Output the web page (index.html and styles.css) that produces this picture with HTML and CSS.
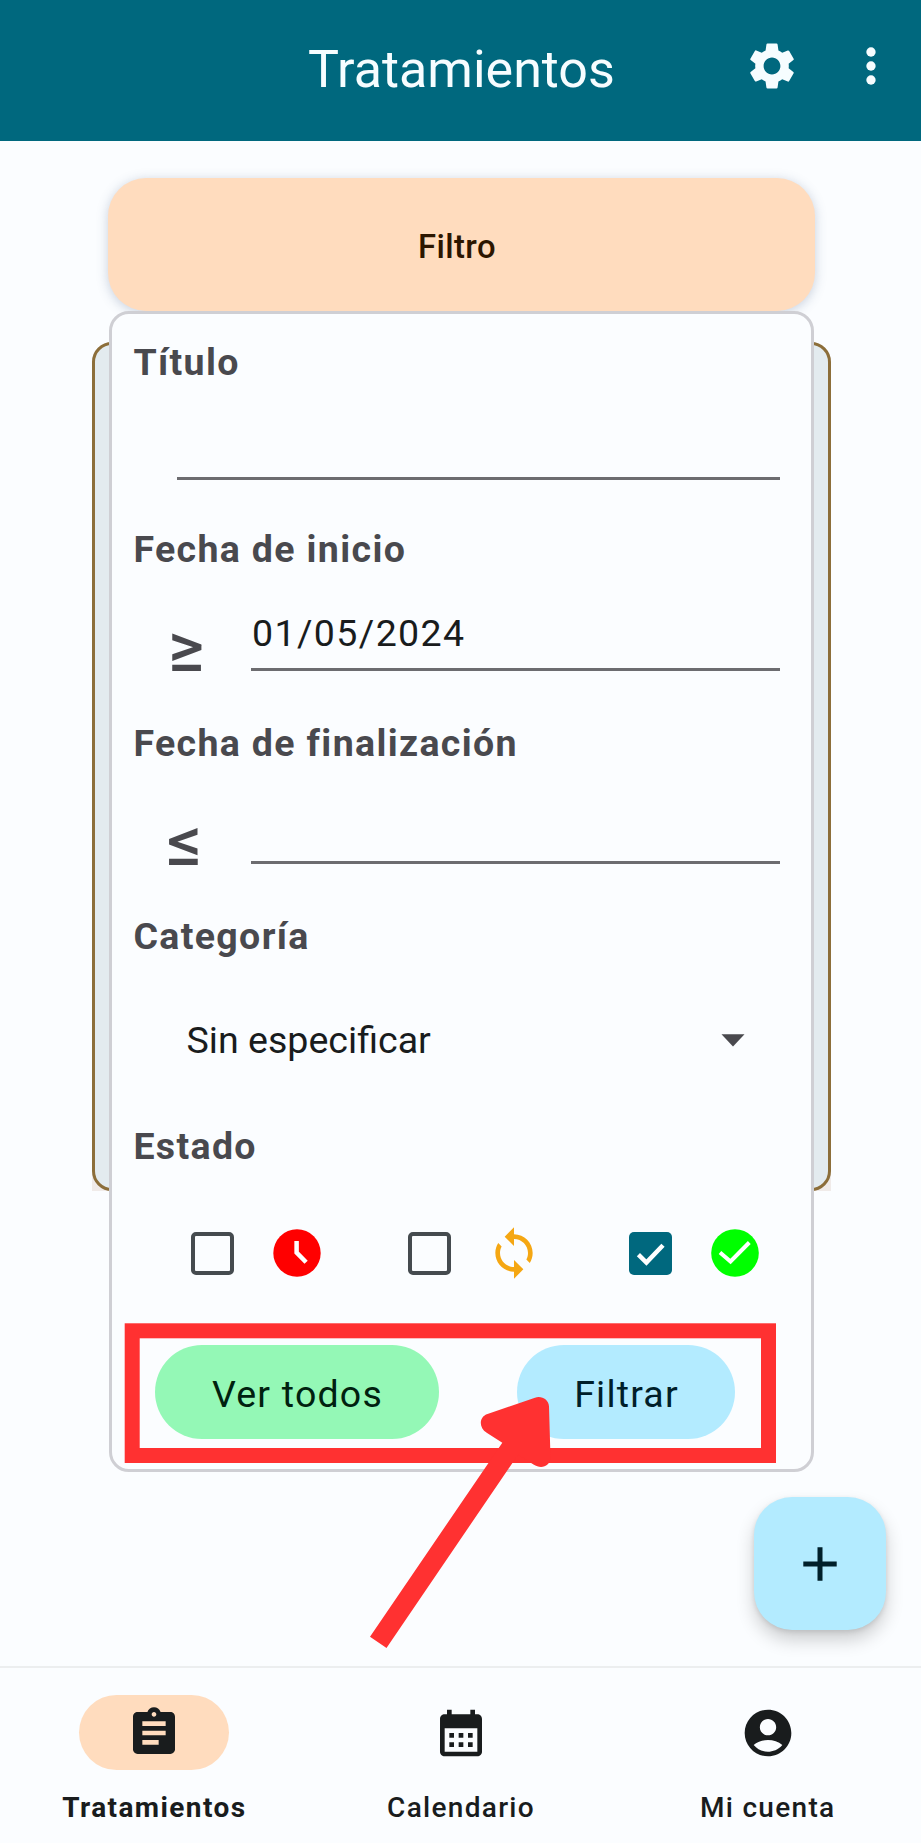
FILE: index.html
```html
<!DOCTYPE html>
<html lang="es">
<head>
<meta charset="utf-8">
<title>Tratamientos</title>
<link rel="stylesheet" href="styles.css">
</head>
<body>
<div class="app">
  <header class="topbar">
    <h1 class="topbar-title">Tratamientos</h1>
    <svg class="icon icon-gear" viewBox="0 0 24 24"><path d="M19.14 12.94c.04-.3.06-.61.06-.94 0-.32-.02-.64-.07-.94l2.03-1.58c.18-.14.23-.41.12-.61l-1.92-3.32c-.12-.22-.37-.29-.59-.22l-2.39.96c-.5-.38-1.03-.7-1.62-.94l-.36-2.54c-.04-.24-.24-.41-.48-.41h-3.84c-.24 0-.43.17-.47.41l-.36 2.54c-.59.24-1.13.57-1.62.94l-2.39-.96c-.22-.08-.47 0-.59.22L2.74 8.87c-.12.21-.08.47.12.61l2.03 1.58c-.05.3-.09.63-.09.94s.02.64.07.94l-2.03 1.58c-.18.14-.23.41-.12.61l1.92 3.32c.12.22.37.29.59.22l2.39-.96c.5.38 1.03.7 1.62.94l.36 2.54c.05.24.24.41.48.41h3.84c.24 0 .44-.17.47-.41l.36-2.54c.59-.24 1.13-.56 1.62-.94l2.39.96c.22.08.47 0 .59-.22l1.92-3.32c.12-.22.07-.47-.12-.61l-2.01-1.58zM12 15.6c-1.98 0-3.6-1.62-3.6-3.6s1.62-3.6 3.6-3.6 3.6 1.62 3.6 3.6-1.62 3.6-3.6 3.6z"/></svg>
    <svg class="icon icon-more" viewBox="0 0 24 24"><circle cx="12" cy="6" r="2"/><circle cx="12" cy="12" r="2"/><circle cx="12" cy="18" r="2"/></svg>
  </header>

  <main class="content">
    <div class="list-card-base"><div class="list-card"></div></div>
    <div class="filter-toggle">Filtro</div>
    <section class="panel">
      <div class="group group-title">
        <div class="label">Título</div>
        <div class="field field-title"></div>
      </div>
      <div class="group group-start">
        <div class="label">Fecha de inicio</div>
        <div class="row">
          <span class="op op-ge">≥</span>
          <div class="field field-start">01/05/2024</div>
        </div>
      </div>
      <div class="group group-end">
        <div class="label">Fecha de finalización</div>
        <div class="row">
          <span class="op op-le">≤</span>
          <div class="field field-end"></div>
        </div>
      </div>
      <div class="group group-category">
        <div class="label">Categoría</div>
        <div class="select">
          <span>Sin especificar</span>
          <svg class="caret" viewBox="0 0 24 13"><path d="M.5.3h23L12 12.6z"/></svg>
        </div>
      </div>
      <div class="group group-state">
        <div class="label">Estado</div>
        <div class="states">
          <span class="check"></span>
          <svg class="state state-clock" viewBox="0 0 48 48"><circle cx="24" cy="24" r="23.7" fill="#f00"/><path d="M23.6 12v11.500l9.500 9.700" fill="none" stroke="#fff" stroke-width="4.5"/></svg>
          <span class="check check-second"></span>
          <svg class="state-sync" viewBox="0 0 24 24"><path d="M12 4V1L8 5l4 4V6c3.31 0 6 2.69 6 6 0 1.01-.25 1.97-.7 2.8l1.46 1.46C19.54 15.03 20 13.57 20 12c0-4.42-3.58-8-8-8zm0 14c-3.31 0-6-2.69-6-6 0-1.01.25-1.97.7-2.8L5.24 7.74C4.46 8.97 4 10.43 4 12c0 4.42 3.58 8 8 8v3l4-4-4-4v3z" fill="#f5a713"/></svg>
          <span class="check check-on"><svg viewBox="0 0 42 42"><path d="M9.200 22.200 17 29.800 33.200 13" fill="none" stroke="#fff" stroke-width="4.4"/></svg></span>
          <svg class="state state-done" viewBox="0 0 48 48"><circle cx="24" cy="24" r="23.8" fill="#0f0"/><path d="M9 23.500 19.500 32.500 38.300 13.500" fill="none" stroke="#fff" stroke-width="4"/></svg>
        </div>
      </div>
      <div class="actions">
        <div class="btn btn-all">Ver todos</div>
        <div class="btn btn-apply">Filtrar</div>
      </div>
    </section>
    <div class="fab"><svg viewBox="0 0 34 34"><path d="M17 .3v33.4M.3 17h33.4" stroke="#001f2a" stroke-width="5"/></svg></div>
  </main>

  <nav class="bottom">
    <div class="tab tab-active">
      <span class="pill"><svg class="icon" viewBox="0 0 24 24"><path d="M19 3h-4.18C14.4 1.84 13.3 1 12 1s-2.4.84-2.82 2H5c-1.1 0-2 .9-2 2v14c0 1.1.9 2 2 2h14c1.1 0 2-.9 2-2V5c0-1.1-.9-2-2-2zm-7 0c.55 0 1 .45 1 1s-.45 1-1 1-1-.45-1-1 .45-1 1-1zm2 14H7v-2h7v2zm3-4H7v-2h10v2zm0-4H7V7h10v2z"/></svg></span>
      <span class="tab-label">Tratamientos</span>
    </div>
    <div class="tab">
      <span class="pill"><svg class="icon" viewBox="0 0 24 24"><path d="M19 4h-1V2h-2v2H8V2H6v2H5c-1.11 0-1.99.9-1.99 2L3 20c0 1.1.89 2 2 2h14c1.1 0 2-.9 2-2V6c0-1.1-.9-2-2-2zm0 16H5V10h14v10zM9 14H7v-2h2v2zm4 0h-2v-2h2v2zm4 0h-2v-2h2v2zm-8 4H7v-2h2v2zm4 0h-2v-2h2v2zm4 0h-2v-2h2v2z"/></svg></span>
      <span class="tab-label">Calendario</span>
    </div>
    <div class="tab">
      <span class="pill"><svg class="icon" viewBox="0 0 24 24"><path d="M12 2C6.48 2 2 6.48 2 12s4.48 10 10 10 10-4.48 10-10S17.52 2 12 2zm0 4c1.93 0 3.5 1.57 3.5 3.5S13.93 13 12 13s-3.5-1.57-3.5-3.5S10.07 6 12 6zm0 14c-2.03 0-4.43-.82-6.14-2.88C7.55 15.8 9.68 15 12 15s4.45.8 6.14 2.12C16.43 19.18 14.03 20 12 20z"/></svg></span>
      <span class="tab-label">Mi cuenta</span>
    </div>
  </nav>

  <svg class="callout" viewBox="0 0 921 1843">
    <rect x="132.2" y="1330.8" width="636.3" height="124.7" fill="none" stroke="#ff3131" stroke-width="15"/>
    <path d="M370 1636.7 502.3 1442.7 486.7 1432.7C478 1427 479.500 1416.500 487.500 1414L535 1397.700C541.500 1395.500 548.700 1399.500 549 1406.500L550.500 1458C550 1466.500 541 1469.500 533.500 1464.500L518 1454.700 386.500 1648z" fill="#ff3131"/>
  </svg>
</div>
</body>
</html>
```
FILE: styles.css
```css
* { box-sizing: border-box; }

body {
  margin: 0;
  background: #fbfdff;
  font-family: Roboto, "Liberation Sans", sans-serif;
  color: #191c1d;
}

.app {
  position: relative;
  display: flex;
  flex-direction: column;
  width: 921px;
  height: 1843px;
  overflow: hidden;
}

.icon { width: 56px; height: 56px; flex: none; fill: #191c1d; }

/* Top bar */
.topbar {
  display: flex;
  align-items: center;
  height: 141px;
  padding: 0 22px 9px 0;
  background: #00687e;
}
.topbar-title {
  flex: 1;
  margin: 0;
  padding: 7px 0 0 308px;
  font-size: 52px;
  font-weight: 400;
  line-height: 60px;
  color: #f6fdff;
  white-space: nowrap;
}
.topbar .icon { fill: #f6fdff; }
.icon-more { margin-left: 43px; }

/* Content */
.content { position: relative; flex: 1; padding: 37px 107px 0 108px; }

.list-card-base {
  position: absolute;
  left: 92px;
  top: 201px;
  width: 739px;
  height: 849px;
  border-radius: 20px 20px 0 0;
  background: #f0ebe9;
}
.list-card {
  height: 100%;
  border: 3px solid #8c6e3a;
  border-radius: 20px;
  background: #e3ebef;
}

.filter-toggle {
  position: relative;
  height: 133px;
  margin: 0 -1px 0 0;
  border-radius: 38px;
  background: #ffdcbe;
  box-shadow: 0 2px 12px rgba(70, 90, 130, .28);
  text-align: center;
  font-size: 32.8px;
  font-weight: 500;
  line-height: 138px;
  letter-spacing: .4px;
  color: #2c1600;
  text-indent: -9px;
}

.panel {
  position: relative;
  height: 1161px;
  margin-left: 1px;
  padding: 26px 31px 0 21px;
  border: 3px solid #cfcfd4;
  border-radius: 20px;
  background: #fbfdff;
}
.group-title { height: 187px; }
.group-start { height: 194px; }
.group-end { height: 193px; }
.group-category { height: 210px; }
.label {
  height: 44px;
  padding-left: .4px;
  font-size: 37.5px;
  font-weight: 700;
  line-height: 44px;
  letter-spacing: 1.35px;
  color: #49494e;
}
.row { display: flex; }
.field {
  border-bottom: 3px solid #6c6c70;
  font-size: 37.5px;
  line-height: 44px;
  letter-spacing: 1.4px;
}
.field-title { height: 96px; margin-left: 44px; }
.field-start { flex: 1; height: 100px; padding: 40px 0 0 1px; }
.field-end { flex: 1; height: 99px; }
.op {
  width: 118px;
  height: 98px;
  padding: 42px 0 0 35px;
  font-size: 69px;
  font-weight: 500;
  line-height: 69px;
  color: #49494e;
}
.op-le { padding-left: 34px; }

.select {
  display: flex;
  align-items: center;
  justify-content: space-between;
  height: 60px;
  margin: 52px 35px 0 53.500px;
  font-size: 37.6px;
}
.caret { width: 24px; height: 13px; fill: #49494e; }

.states { display: flex; align-items: center; height: 52px; margin: 59px 0 0 58px; }
.check {
  width: 43px;
  height: 43px;
  flex: none;
  border: 4.5px solid #454b4f;
  border-radius: 5px;
}
.check-second { margin-left: 87px; }
.check-on { margin-left: 87px; border: 0; background: #00687e; }
.check svg { display: block; width: 43px; height: 43px; }
.state { width: 48px; height: 48px; flex: none; }
.state-clock { margin-left: 39px; }
.state-sync { width: 56px; height: 56px; flex: none; margin-left: 35px; }
.state-done { margin-left: 39px; }

.actions { display: flex; gap: 78px; margin: 66px 0 0 22px; }
.btn {
  height: 94px;
  border-radius: 47px;
  font-size: 37.5px;
  line-height: 98px;
  text-align: center;
  text-indent: 1px;
  letter-spacing: 1.2px;
}
.btn-all { width: 284px; background: #94f8b6; color: #00210f; }
.btn-apply { width: 218px; background: #b3ebff; color: #001f2a; }

.fab {
  position: absolute;
  left: 754px;
  top: 1356px;
  display: flex;
  align-items: center;
  justify-content: center;
  width: 132px;
  height: 133px;
  border-radius: 38px;
  background: #b3ebff;
  box-shadow: 0 10px 18px rgba(0, 0, 0, .19), 0 2px 5px rgba(0, 0, 0, .1);
}
.fab svg { width: 34px; height: 34px; }

/* Bottom navigation */
.bottom {
  display: flex;
  height: 177px;
  padding: 27px 0 0 1px;
  border-top: 2px solid #eceeef;
}
.tab { display: flex; flex: 1; flex-direction: column; align-items: center; }
.pill {
  display: flex;
  align-items: center;
  justify-content: center;
  width: 150px;
  height: 75px;
  border-radius: 38px;
}
.tab-active .pill { background: #ffdcbe; }
.tab-label {
  margin-top: 21px;
  font-size: 28px;
  font-weight: 500;
  line-height: 33px;
  letter-spacing: 1.3px;
}
.tab-active .tab-label { font-weight: 700; letter-spacing: 1.4px; }

.callout { position: absolute; left: 0; top: 0; width: 921px; height: 1843px; }
```
